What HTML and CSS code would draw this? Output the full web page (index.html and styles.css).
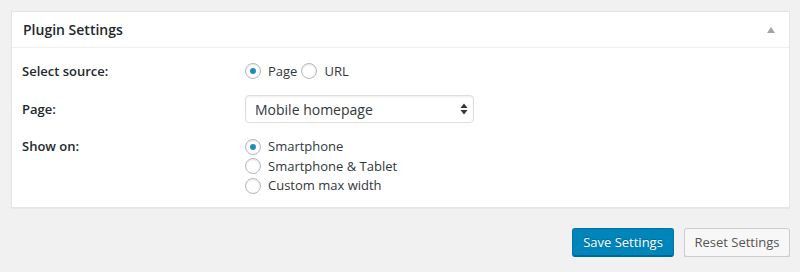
FILE: index.html
```html
<!DOCTYPE html>
<html>
<head>
<meta charset="utf-8">
<link rel="stylesheet" href="styles.css">
</head>
<body>
<div class="wrap">
  <div class="panel">
    <div class="panel-head">
      <h2 class="panel-title">Plugin Settings</h2>
      <span class="toggle"></span>
    </div>
    <div class="panel-body">
      <div class="row row-source">
        <div class="label">Select source:</div>
        <div class="field inline">
          <label class="opt"><span class="radio checked"></span>Page</label>
          <label class="opt"><span class="radio"></span>URL</label>
        </div>
      </div>
      <div class="row row-page">
        <div class="label">Page:</div>
        <div class="field">
          <div class="select">
            <span class="select-text">Mobile homepage</span>
            <svg class="select-arrows" width="8" height="12" viewBox="0 0 8 12"><path d="M4 0.5 L7.5 5 L0.5 5 Z M0.5 7 L7.5 7 L4 11.5 Z" fill="#32373c"/></svg>
          </div>
        </div>
      </div>
      <div class="row row-show">
        <div class="label">Show on:</div>
        <div class="field stack">
          <label class="opt"><span class="radio checked"></span>Smartphone</label>
          <label class="opt"><span class="radio"></span>Smartphone &amp; Tablet</label>
          <label class="opt"><span class="radio"></span>Custom max width</label>
        </div>
      </div>
    </div>
  </div>
  <div class="actions">
    <button class="btn btn-primary">Save Settings</button>
    <button class="btn btn-secondary">Reset Settings</button>
  </div>
</div>
</body>
</html>
```
FILE: styles.css
```css
html, body {
  margin: 0;
  padding: 0;
  background: #f1f1f1;
}
body {
  font-family: "Open Sans", "Liberation Sans", sans-serif;
  color: #23282d;
  font-size: 13px;
}
.wrap {
  padding: 11px 10px 0 11px;
}
.panel {
  background: #fff;
  border: 1px solid #e5e5e5;
  box-shadow: 0 1px 1px rgba(0,0,0,0.04);
}
.panel-head {
  display: flex;
  align-items: center;
  justify-content: space-between;
  height: 35px;
  border-bottom: 1px solid #eee;
  padding: 0 14px 0 11px;
}
.panel-title {
  margin: 0;
  font-size: 14px;
  font-weight: 600;
  color: #23282d;
  line-height: 20px;
}
.toggle {
  width: 0;
  height: 0;
  border-left: 4px solid transparent;
  border-right: 4px solid transparent;
  border-bottom: 6px solid #a0a5aa;
}
.panel-body {
  padding: 12px 10px 11px 10px;
}
.row {
  display: flex;
  align-items: flex-start;
}
.label {
  width: 223px;
  font-weight: 600;
  font-size: 13px;
  line-height: 22px;
  color: #23282d;
}
.row-page {
  margin-top: 13px;
}
.row-page .label {
  line-height: 28px;
}
.row-show {
  margin-top: 14px;
}
.row-show .label {
  line-height: 19.5px;
}
.field {
  font-size: 13px;
  color: #32373c;
}
.inline {
  display: flex;
  align-items: center;
  height: 22px;
}
.stack {
  display: flex;
  flex-direction: column;
}
.opt {
  display: flex;
  align-items: center;
  line-height: 19.5px;
  font-size: 13px;
  color: #32373c;
}
.inline .opt {
  line-height: 22px;
}
.inline .opt + .opt {
  margin-left: 4px;
}
.radio {
  box-sizing: border-box;
  width: 16px;
  height: 16px;
  border: 1px solid #b4b9be;
  border-radius: 50%;
  background: #fff;
  box-shadow: inset 0 1px 2px rgba(0,0,0,0.1);
  margin-right: 7px;
  position: relative;
  flex: none;
}
.radio.checked::before {
  content: "";
  position: absolute;
  left: 4px;
  top: 4px;
  width: 6px;
  height: 6px;
  border-radius: 50%;
  background: #1e8cbe;
}
.select {
  box-sizing: border-box;
  width: 229px;
  height: 28px;
  border: 1px solid #ddd;
  border-radius: 4px;
  background: #fff;
  box-shadow: inset 0 1px 2px rgba(0,0,0,0.07);
  display: flex;
  align-items: center;
  justify-content: space-between;
  padding: 0 5px 0 9px;
}
.select-text {
  font-size: 14px;
  color: #32373c;
}
.actions {
  display: flex;
  justify-content: flex-end;
  gap: 10px;
  margin-top: 20px;
}
.btn {
  font-family: "Open Sans", "Liberation Sans", sans-serif;
  font-size: 13px;
  height: 29px;
  border-radius: 3px;
  padding: 0;
  margin: 0;
  white-space: nowrap;
  cursor: pointer;
}
.btn-primary {
  width: 102px;
  background: #0085ba;
  border: 1px solid #0073aa;
  border-bottom-color: #006799;
  color: #fff;
  box-shadow: inset 0 -1px 0 #006799;
  text-shadow: 0 -1px 1px #006799;
  font-weight: 500;
}
.btn-secondary {
  width: 106px;
  background: #f7f7f7;
  border: 1px solid #ccc;
  color: #555;
  box-shadow: 0 1px 0 #ccc;
}
```
